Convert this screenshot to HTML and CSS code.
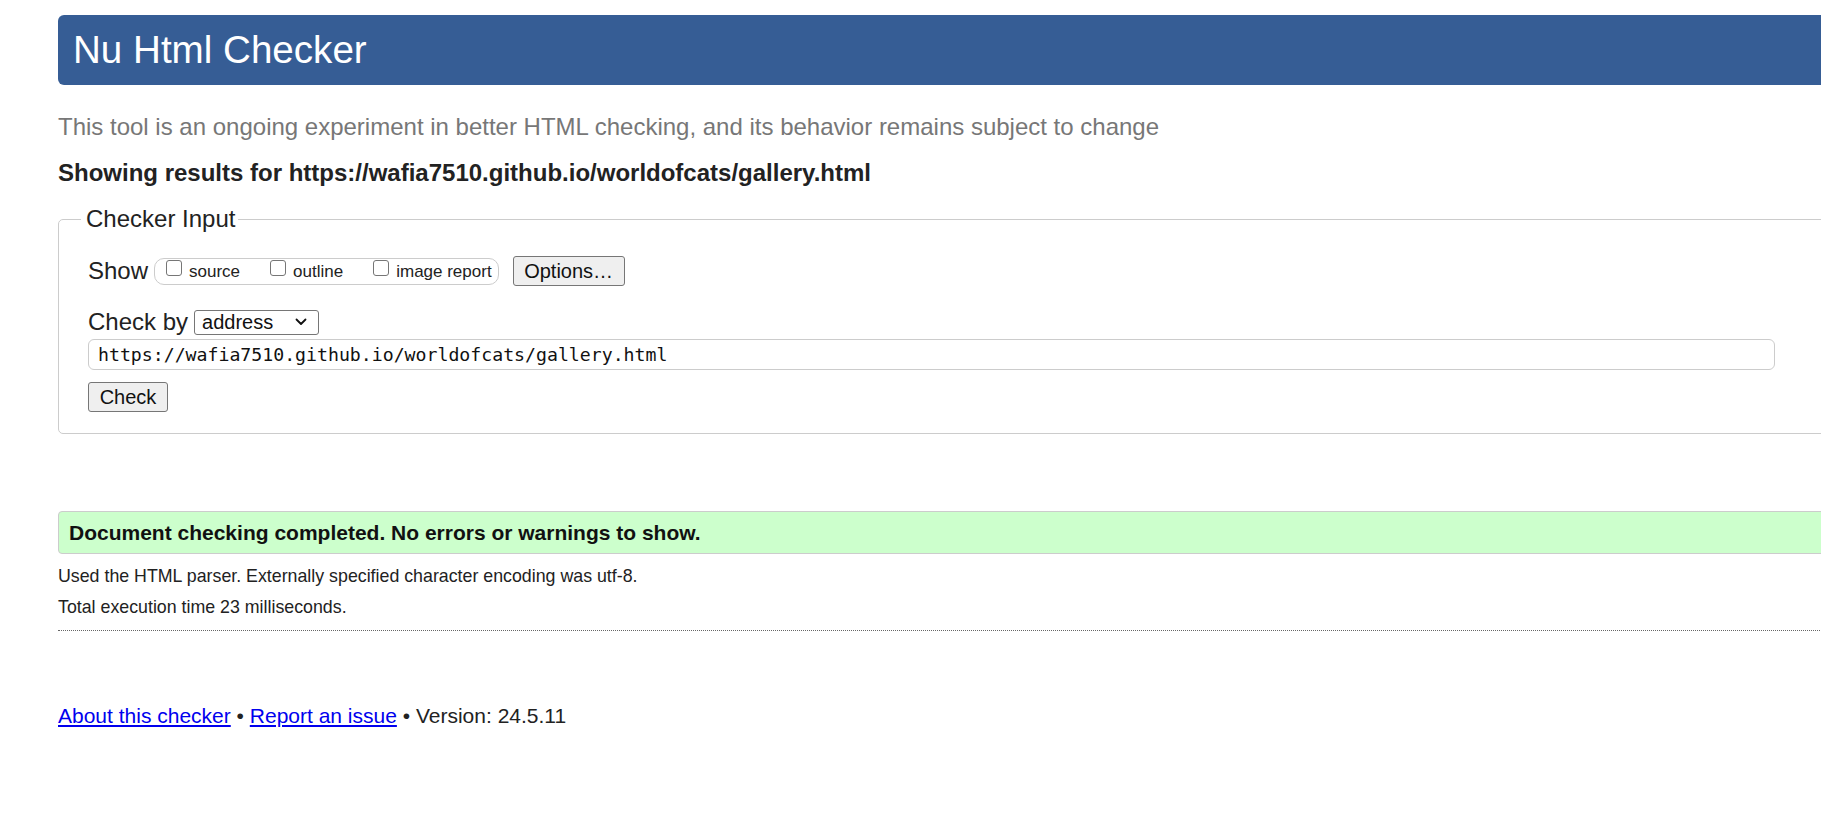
FILE: index.html
```html
<!DOCTYPE html>
<html lang="en">
<head>
<meta charset="utf-8">
<title>Showing results for https://wafia7510.github.io/worldofcats/gallery.html - Nu Html Checker</title>
<link rel="stylesheet" href="styles.css">
</head>
<body>
<div class="page">
  <h1 class="masthead">Nu Html Checker</h1>
  <p class="tagline">This tool is an ongoing experiment in better HTML checking, and its behavior remains subject to change</p>
  <p class="showing">Showing results for https://wafia7510.github.io/worldofcats/gallery.html</p>

  <fieldset class="checker">
    <legend class="legend">Checker Input</legend>
    <div class="show-row">
      <span class="label">Show</span>
      <span class="pill">
        <span class="opt"><span class="box"></span><span class="opt-text">source</span></span>
        <span class="opt"><span class="box"></span><span class="opt-text">outline</span></span>
        <span class="opt"><span class="box"></span><span class="opt-text">image report</span></span>
      </span>
      <span class="btn btn-options">Options…</span>
    </div>
    <div class="by-row">
      <span class="label">Check by</span>
      <span class="select">
        <span class="select-text">address</span>
        <svg class="chevron" width="12" height="8" viewBox="0 0 12 8"><path d="M1.5 1.5 L6 6 L10.5 1.5" fill="none" stroke="#111" stroke-width="1.8" stroke-linecap="round" stroke-linejoin="round"/></svg>
      </span>
    </div>
    <div class="url">https://wafia7510.github.io/worldofcats/gallery.html</div>
    <span class="btn btn-check">Check</span>
  </fieldset>

  <div class="success">Document checking completed. No errors or warnings to show.</div>
  <p class="details first">Used the HTML parser. Externally specified character encoding was utf-8.</p>
  <p class="details">Total execution time 23 milliseconds.</p>
  <hr class="dotted">

  <p class="footer"><a href="#" class="link">About this checker</a> • <a href="#" class="link">Report an issue</a> • Version: 24.5.11</p>
</div>
</body>
</html>
```

FILE: styles.css
```css
html {
  overflow: hidden;
  background: #fff;
}

body {
  margin: 0;
  padding: 0 0 0 58px;
  font-family: "Liberation Sans", Arial, sans-serif;
  color: #222;
  background: #fff;
}

.page {
  width: 1860px;
}

.masthead {
  margin: 15px 0 0 0;
  height: 70px;
  line-height: 70px;
  padding-left: 15px;
  font-size: 38.6px;
  font-weight: normal;
  color: #fff;
  background: #365d95;
  border-radius: 6px 0 0 6px;
}

.tagline {
  margin: 28px 0 0 0;
  font-size: 24px;
  color: #777;
}

.showing {
  margin: 18px 0 0 0;
  font-size: 24px;
  font-weight: bold;
  color: #222;
}

.checker {
  margin: 18px 0 0 0;
  padding: 23px 0 21px 29px;
  border: 1px solid #ccc;
  border-radius: 5px;
  min-width: 0;
}

.legend {
  margin-left: -7px;
  padding: 0 3px 0 5px;
  font-size: 24px;
  color: #222;
}

.show-row {
  display: flex;
  align-items: center;
  height: 30px;
}

.label {
  font-size: 24px;
  line-height: 30px;
  color: #222;
}

.pill {
  display: flex;
  align-items: flex-start;
  height: 25px;
  margin-left: 6px;
  padding: 0 6px 0 11px;
  border: 1px solid #ccc;
  border-radius: 10px;
  font-size: 17px;
  line-height: 25px;
}

.opt {
  display: flex;
  align-items: flex-start;
}

.opt + .opt {
  margin-left: 30px;
}

.box {
  width: 16px;
  height: 16px;
  box-sizing: border-box;
  margin-top: 1px;
  margin-right: 7px;
  border: 1px solid #767676;
  border-radius: 3px;
  background: #fff;
}

.opt-text {
  color: #222;
}

.btn {
  display: flex;
  align-items: center;
  justify-content: center;
  box-sizing: border-box;
  height: 30px;
  font-size: 20px;
  color: #111;
  background: #efefef;
  border: 1px solid #767676;
  border-radius: 3px;
}

.btn-options {
  width: 112px;
  margin-left: 14px;
}

.by-row {
  display: flex;
  align-items: center;
  height: 28px;
  margin-top: 22px;
}

.select {
  display: flex;
  align-items: center;
  justify-content: space-between;
  box-sizing: border-box;
  width: 125px;
  height: 25px;
  margin-left: 6px;
  padding: 0 11px 0 7px;
  border: 1px solid #767676;
  border-radius: 3px;
  background: #fff;
  font-size: 20px;
  color: #111;
}

.chevron {
  display: block;
}

.url {
  box-sizing: border-box;
  width: 1687px;
  height: 31px;
  margin-top: 3px;
  padding-left: 9px;
  border: 1px solid #ccc;
  border-radius: 6px;
  font-family: "DejaVu Sans Mono", "Liberation Mono", monospace;
  font-size: 18.2px;
  line-height: 29px;
  color: #111;
}

.btn-check {
  width: 80px;
  margin-top: 12px;
}

.success {
  margin-top: 77px;
  box-sizing: border-box;
  height: 43px;
  padding-left: 10px;
  border: 1px solid #ccc;
  border-radius: 4px 0 0 4px;
  background: #ccffcc;
  font-size: 21px;
  font-weight: bold;
  line-height: 41px;
  color: #111;
}

.details {
  margin: 11px 0 0 0;
  font-size: 17.8px;
  line-height: 20px;
  color: #222;
}

.details.first {
  margin-top: 12px;
}

.dotted {
  margin: 13px 0 0 0;
  height: 0;
  border: 0;
  border-top: 1px dotted #666;
}

.footer {
  margin: 73px 0 0 0;
  font-size: 21px;
  line-height: 23px;
  color: #222;
}

.link {
  color: #0000ee;
  text-decoration: underline;
}
```
